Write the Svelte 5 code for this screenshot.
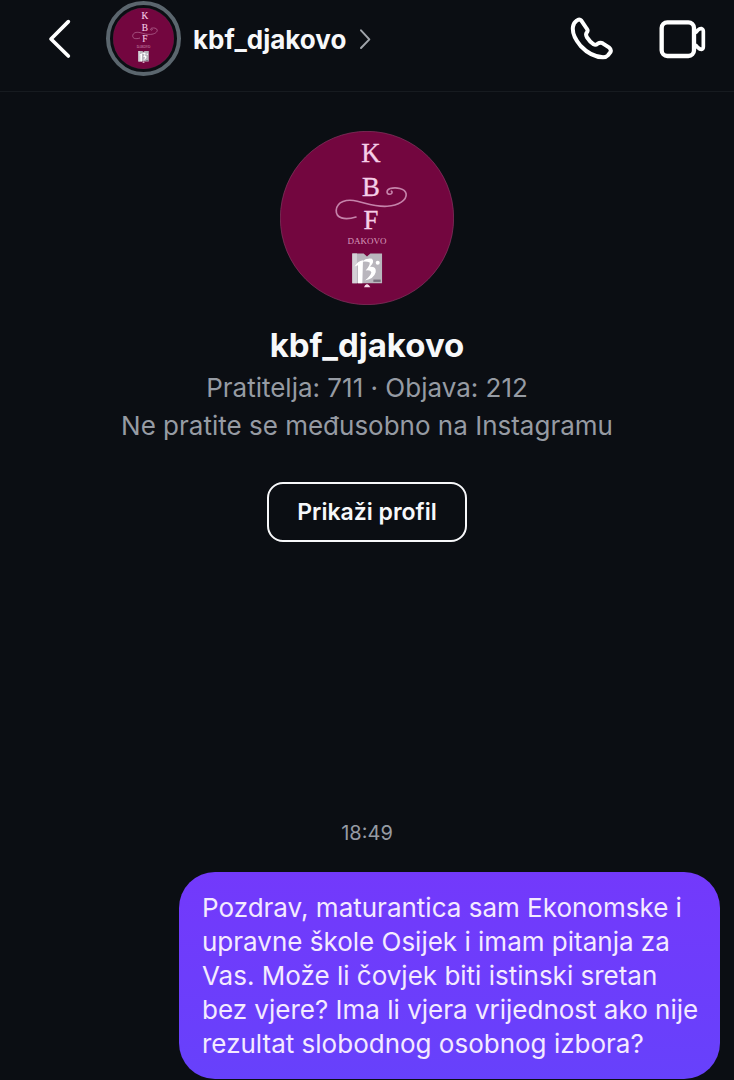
<script>
  const profile = { name: 'kbf_djakovo', followers: 711, posts: 212 };
  const message =
    'Pozdrav, maturantica sam Ekonomske i upravne škole Osijek i imam pitanja za Vas. Može li čovjek biti istinski sretan bez vjere? Ima li vjera vrijednost ako nije rezultat slobodnog osobnog izbora?';
</script>

{#snippet crest()}
  <svg class="crest" viewBox="33 33 520 520" aria-hidden="true">
    <circle cx="293" cy="293" r="259" fill="#73063f" stroke="#8b3765" stroke-width="2" />
    <g fill="#f6cfe8" font-family="'Liberation Serif', serif" text-anchor="middle">
      <g font-size="80" stroke="#f6cfe8" stroke-width="1">
        <text x="305" y="126">K</text>
        <text x="305" y="226">B</text>
        <text x="305" y="325">F</text>
      </g>
      <text x="293" y="370" font-size="27" fill="#d79abb">DAKOVO</text>
    </g>
    <path
      d="M260 290C225 301 200 293 201 270C203 244 232 235 264 243C297 251 319 260 353 258C388 256 412 239 410 221C407 204 379 200 362 205C349 210 351 223 362 222C369 221 369 215 366 213"
      fill="none" stroke="#c583aa" stroke-width="5" stroke-linecap="round" />
    <path d="M249 399H283L293 408L303 399H338V488H249Z" fill="#b9b6bd" />
    <path d="M249 399H263V488H249Z" fill="#d4d0d6" />
    <path d="M266 488V434L256 438Q264 422 281 419L279 488Z" fill="#fff" />
    <path d="M277 424Q291 412 308 415Q317 424 302 439Q322 438 319 455Q314 474 287 480Q304 466 306 455Q303 447 289 450Q303 434 301 426Q291 421 277 424Z" fill="#fff" />
    <circle cx="325" cy="427" r="6" fill="#fff" />
    <path d="M312 477H334V484H312Z" fill="#77717d" />
    <path d="M284 500Q286 492 293 490Q300 492 303 500Z" fill="#f7dcea" />
  </svg>
{/snippet}

<div class="screen">
  <header>
    <button class="icon back" aria-label="Natrag">
      <svg width="24" height="42" viewBox="144 54 72 126" aria-hidden="true">
        <path d="M205 65L153 117L205 168" fill="none" stroke="#fff" stroke-width="11" stroke-linecap="round" stroke-linejoin="round" />
      </svg>
    </button>
    <a class="account" href="#profile">
      <span class="ring">{@render crest()}</span>
      <span class="handle">{profile.name}</span>
      <svg width="14" height="22" viewBox="1083 83 42 66" aria-hidden="true">
        <path d="M1092 90L1117 117L1092 143" fill="none" stroke="#a0a4aa" stroke-width="6" stroke-linecap="round" stroke-linejoin="round" />
      </svg>
    </a>
    <div class="calls">
      <button class="icon" aria-label="Glasovni poziv">
        <svg width="45" height="45" viewBox="90 48 135 135" aria-hidden="true">
          <path
            d="M110 62Q118 55 124 62L141 87Q145 92 140 98Q136 104 141 112Q150 126 161 133Q167 136 173 131Q181 126 188 130L208 143Q215 149 211 157L204 166Q199 172 189 172C165 171 140 157 122 138C105 118 96 98 99 80Q101 68 110 62Z"
            fill="none" stroke="#fff" stroke-width="12" stroke-linejoin="round" />
        </svg>
      </button>
      <button class="icon" aria-label="Videopoziv">
        <svg width="48" height="40" viewBox="354 56 144 120" aria-hidden="true">
          <g fill="none" stroke="#fff" stroke-linejoin="round">
            <rect x="365" y="66" width="97" height="101" rx="17" stroke-width="13" />
            <path d="M466 98L474 89Q479 84 485 85Q490 87 490 93V139Q490 146 484 147Q479 147 474 142L466 133" stroke-width="11" />
          </g>
        </svg>
      </button>
    </div>
  </header>

  <main>
    <section class="profile">
      <div class="portrait">{@render crest()}</div>
      <h1>{profile.name}</h1>
      <p>Pratitelja: {profile.followers} · Objava: {profile.posts}</p>
      <p>Ne pratite se međusobno na Instagramu</p>
      <button class="view">Prikaži profil</button>
    </section>
    <time>18:49</time>
    <p class="bubble">{message}</p>
  </main>
</div>

<style>
  :global(body) {
    margin: 0;
    background: #0b0e13;
  }
  .screen {
    min-height: 100vh;
    display: flex;
    flex-direction: column;
    background: #0b0e13;
    color: #f7f8fa;
    font-family: Inter, 'Liberation Sans', sans-serif;
  }
  header {
    display: flex;
    align-items: center;
    padding: 1px 28px 15px 48px;
    border-bottom: 1px solid #171b20;
  }
  button {
    font: inherit;
    color: inherit;
    background: none;
    cursor: pointer;
  }
  .icon {
    display: flex;
    padding: 0;
    border: 0;
  }
  .account {
    display: flex;
    align-items: center;
    gap: 12px;
    margin-left: 34px;
    color: inherit;
    text-decoration: none;
  }
  .ring {
    box-sizing: border-box;
    width: 75px;
    height: 75px;
    padding: 3px;
    border: 4px solid #5b666e;
    border-radius: 50%;
  }
  .crest {
    display: block;
    width: 100%;
    height: 100%;
  }
  .handle {
    padding-top: 2px;
    font-size: 26px;
    font-weight: 700;
    line-height: 34px;
  }
  .calls {
    display: flex;
    align-items: center;
    gap: 43px;
    margin-left: auto;
  }
  main {
    flex: 1;
    display: flex;
    flex-direction: column;
    align-items: center;
    padding: 39px 14px 1px;
  }
  .profile {
    display: flex;
    flex-direction: column;
    align-items: center;
    text-align: center;
  }
  .portrait {
    width: 174px;
    height: 174px;
  }
  h1 {
    margin: 17px 0 1px;
    font-size: 33px;
    font-weight: 700;
    line-height: 46px;
  }
  .profile p {
    margin: 0;
    color: #969ba3;
    font-size: 26px;
    line-height: 38px;
  }
  .view {
    margin-top: 37px;
    padding: 11px 28px;
    border: 2px solid #f7f8fa;
    border-radius: 16px;
    font-size: 23px;
    font-weight: 600;
    line-height: 34px;
  }
  time {
    margin-top: auto;
    padding-top: 40px;
    color: #969ba3;
    font-size: 20px;
    line-height: 24px;
  }
  .bubble {
    box-sizing: border-box;
    align-self: flex-end;
    max-width: 541px;
    margin: 27px 0 0;
    padding: 19px 18px 18px 23px;
    border-radius: 36px;
    background: linear-gradient(#7339fb, #6741fb);
    color: #f4eaff;
    font-size: 26px;
    line-height: 34px;
  }
</style>
